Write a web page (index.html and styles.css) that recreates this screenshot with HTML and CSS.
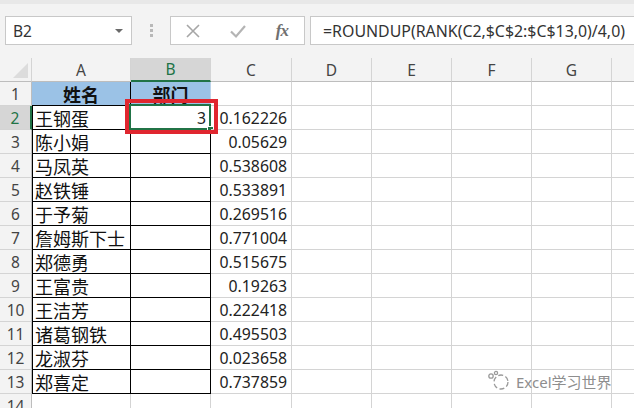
FILE: index.html
```html
<!DOCTYPE html>
<html>
<head>
<meta charset="utf-8">
<link rel="stylesheet" href="styles.css">
</head>
<body>
<div class="app">
  <div class="topband"></div>
  <div class="toolbar">
    <div class="namebox"><span>B2</span><span class="caret"></span></div>
    <div class="grip"><i></i><i></i><i></i></div>
    <div class="fxbox">
      <svg class="ico" width="16" height="16" viewBox="0 0 16 16"><path d="M2 2 L14 14 M14 2 L2 14" stroke="#a6a6a6" stroke-width="1.6" fill="none"/></svg>
      <svg class="ico" width="18" height="16" viewBox="0 0 18 16"><path d="M2 8.5 L7 13.5 L16 3" stroke="#b4b4b4" stroke-width="2.2" fill="none"/></svg>
      <span class="fx">fx</span>
    </div>
    <div class="formula">=ROUNDUP(RANK(C2,$C$2:$C$13,0)/4,0)</div>
  </div>
  <div class="sheet">
    <div class="corner"><span class="tri"></span></div>
    <div class="ch">A</div><div class="ch sel">B</div><div class="ch">C</div><div class="ch">D</div><div class="ch">E</div><div class="ch">F</div><div class="ch">G</div><div class="ch last"></div>

    <div class="rh">1</div><div class="c hd hdA">姓名</div><div class="c hd">部门</div><div class="c"></div><div class="c"></div><div class="c"></div><div class="c"></div><div class="c"></div><div class="c last"></div>

    <div class="rh sel">2</div><div class="c tA">王钢蛋</div><div class="c tB active"><span class="val">3</span><span class="selbox"><span class="handle"></span></span><span class="redbox"></span></div><div class="c num">0.162226</div><div class="c"></div><div class="c"></div><div class="c"></div><div class="c"></div><div class="c last"></div>

    <div class="rh">3</div><div class="c tA">陈小娟</div><div class="c tB"></div><div class="c num">0.05629</div><div class="c"></div><div class="c"></div><div class="c"></div><div class="c"></div><div class="c last"></div>

    <div class="rh">4</div><div class="c tA">马凤英</div><div class="c tB"></div><div class="c num">0.538608</div><div class="c"></div><div class="c"></div><div class="c"></div><div class="c"></div><div class="c last"></div>

    <div class="rh">5</div><div class="c tA">赵铁锤</div><div class="c tB"></div><div class="c num">0.533891</div><div class="c"></div><div class="c"></div><div class="c"></div><div class="c"></div><div class="c last"></div>

    <div class="rh">6</div><div class="c tA">于予菊</div><div class="c tB"></div><div class="c num">0.269516</div><div class="c"></div><div class="c"></div><div class="c"></div><div class="c"></div><div class="c last"></div>

    <div class="rh">7</div><div class="c tA">詹姆斯下士</div><div class="c tB"></div><div class="c num">0.771004</div><div class="c"></div><div class="c"></div><div class="c"></div><div class="c"></div><div class="c last"></div>

    <div class="rh">8</div><div class="c tA">郑德勇</div><div class="c tB"></div><div class="c num">0.515675</div><div class="c"></div><div class="c"></div><div class="c"></div><div class="c"></div><div class="c last"></div>

    <div class="rh">9</div><div class="c tA">王富贵</div><div class="c tB"></div><div class="c num">0.19263</div><div class="c"></div><div class="c"></div><div class="c"></div><div class="c"></div><div class="c last"></div>

    <div class="rh">10</div><div class="c tA">王洁芳</div><div class="c tB"></div><div class="c num">0.222418</div><div class="c"></div><div class="c"></div><div class="c"></div><div class="c"></div><div class="c last"></div>

    <div class="rh">11</div><div class="c tA">诸葛钢铁</div><div class="c tB"></div><div class="c num">0.495503</div><div class="c"></div><div class="c"></div><div class="c"></div><div class="c"></div><div class="c last"></div>

    <div class="rh">12</div><div class="c tA">龙淑芬</div><div class="c tB"></div><div class="c num">0.023658</div><div class="c"></div><div class="c"></div><div class="c"></div><div class="c"></div><div class="c last"></div>

    <div class="rh">13</div><div class="c tA">郑喜定</div><div class="c tB"></div><div class="c num">0.737859</div><div class="c"></div><div class="c"></div><div class="c"></div><div class="c"></div><div class="c last"></div>

    <div class="rh">14</div><div class="c"></div><div class="c"></div><div class="c"></div><div class="c"></div><div class="c"></div><div class="c"></div><div class="c"></div><div class="c last"></div>

    <div class="watermark">
      <svg width="26" height="22" viewBox="0 0 26 22"><g fill="none" stroke="#9a9a9a" stroke-width="1.3"><circle cx="15" cy="12" r="7" stroke-dasharray="5 2.5"/><circle cx="5" cy="6" r="2.2"/><circle cx="10" cy="3" r="1.6"/></g></svg>
      <span>Excel学习世界</span>
    </div>
  </div>
</div>
</body>
</html>
```
FILE: styles.css
```css
html, body {
  margin: 0;
  padding: 0;
  background: #ffffff;
}
.app {
  position: relative;
  width: 634px;
  height: 408px;
  overflow: hidden;
  font-family: "Noto Sans", "Noto Sans CJK SC", sans-serif;
  background: #f3f3f3;
}
.topband {
  height: 4px;
  background: #e8e8e8;
}
.toolbar {
  display: flex;
  align-items: stretch;
  height: 29px;
  padding: 12px 0 13px 5px;
}
.namebox {
  box-sizing: border-box;
  width: 127px;
  background: #fff;
  border: 1px solid #c8c8c8;
  display: flex;
  align-items: center;
  justify-content: space-between;
  padding: 0 8px 0 7px;
  font-size: 15.5px;
  color: #333;
}
.caret {
  width: 0;
  height: 0;
  border-left: 4px solid transparent;
  border-right: 4px solid transparent;
  border-top: 4px solid #6a6a6a;
}
.grip {
  width: 38px;
  display: flex;
  flex-direction: column;
  align-items: center;
  justify-content: center;
  gap: 2px;
}
.grip i {
  display: block;
  width: 3px;
  height: 3px;
  background: #b8b8b8;
}
.fxbox {
  box-sizing: border-box;
  width: 135px;
  background: #fff;
  border: 1px solid #c8c8c8;
  display: flex;
  align-items: center;
  padding: 0 14px 0 14px;
  justify-content: space-between;
}
.ico {
  display: block;
}
.fx {
  font-family: "Liberation Serif", serif;
  font-style: italic;
  font-weight: bold;
  font-size: 17px;
  color: #707070;
  letter-spacing: -1px;
  padding-right: 2px;
}
.formula {
  box-sizing: border-box;
  margin-left: 5px;
  flex: 1;
  margin-right: -10px;
  background: #fff;
  border: 1px solid #c8c8c8;
  display: flex;
  align-items: center;
  padding-left: 12px;
  font-size: 15.9px;
  color: #333;
  white-space: nowrap;
}
.sheet {
  position: relative;
  display: grid;
  grid-template-columns: 32px 99px 80px 81px 80px 80px 80px 80px 1fr;
  grid-auto-rows: 24px;
  background: #fff;
}
.corner {
  position: relative;
  background: #f3f3f3;
  border-right: 1px solid #d4d4d4;
  border-bottom: 1px solid #bdbdbd;
}
.tri {
  position: absolute;
  right: 3px;
  bottom: 3px;
  width: 0;
  height: 0;
  border-left: 15px solid transparent;
  border-bottom: 15px solid #dcdcdc;
}
.ch {
  background: #f3f3f3;
  border-right: 1px solid #d4d4d4;
  border-bottom: 1px solid #bdbdbd;
  display: flex;
  align-items: center;
  justify-content: center;
  font-size: 15.5px;
  color: #444;
}
.ch.sel {
  background: #d6d6d6;
  color: #217346;
  border-bottom: 2px solid #217346;
}
.rh {
  background: #f3f3f3;
  border-right: 1px solid #bdbdbd;
  border-bottom: 1px solid #d4d4d4;
  display: flex;
  align-items: center;
  justify-content: center;
  font-size: 15.5px;
  color: #444;
}
.rh.sel {
  background: #d6d6d6;
  color: #217346;
  border-right: 2px solid #217346;
}
.c {
  position: relative;
  border-right: 1px solid #d4d4d4;
  border-bottom: 1px solid #d4d4d4;
  display: flex;
  align-items: center;
  font-size: 18px;
  color: #111;
  font-family: "Noto Sans CJK SC", sans-serif;
  white-space: nowrap;
}
.last {
  border-right: none;
}
.hd {
  background: #9bc2e6;
  justify-content: center;
  font-weight: bold;
  border-bottom: 1px solid #000;
  border-right-color: #bcd3ea;
}
.hdA {
  border-right-color: #000;
}
.tA {
  padding-left: 3px;
  border-right-color: #000;
  border-bottom-color: #000;
  box-shadow: inset 1px 0 0 #000;
}
.tB {
  border-right-color: #000;
  border-bottom-color: #000;
}
.num {
  justify-content: flex-end;
  padding-right: 4px;
  font-family: "Noto Sans", sans-serif;
  font-size: 15.8px;
  color: #222;
}
.active {
  justify-content: flex-end;
  padding-right: 4px;
  font-family: "Noto Sans", sans-serif;
  font-size: 15.8px;
  color: #222;
}
.val {
  position: relative;
  z-index: 1;
}
.selbox {
  position: absolute;
  left: -2px;
  top: -2px;
  right: -1px;
  bottom: -1px;
  border: 2px solid #217346;
}
.handle {
  position: absolute;
  right: -5px;
  bottom: -5px;
  width: 5px;
  height: 5px;
  background: #217346;
  border: 1px solid #fff;
}
.redbox {
  position: absolute;
  left: -6px;
  top: -7px;
  right: -8px;
  bottom: -5px;
  border: 4px solid #e0262f;
  z-index: 2;
}
.watermark {
  position: absolute;
  left: 486px;
  top: 312px;
  display: flex;
  align-items: center;
  gap: 4px;
  font-family: "Noto Sans", "Noto Sans CJK SC", sans-serif;
  font-size: 15px;
  color: #8e8e8e;
}
```
